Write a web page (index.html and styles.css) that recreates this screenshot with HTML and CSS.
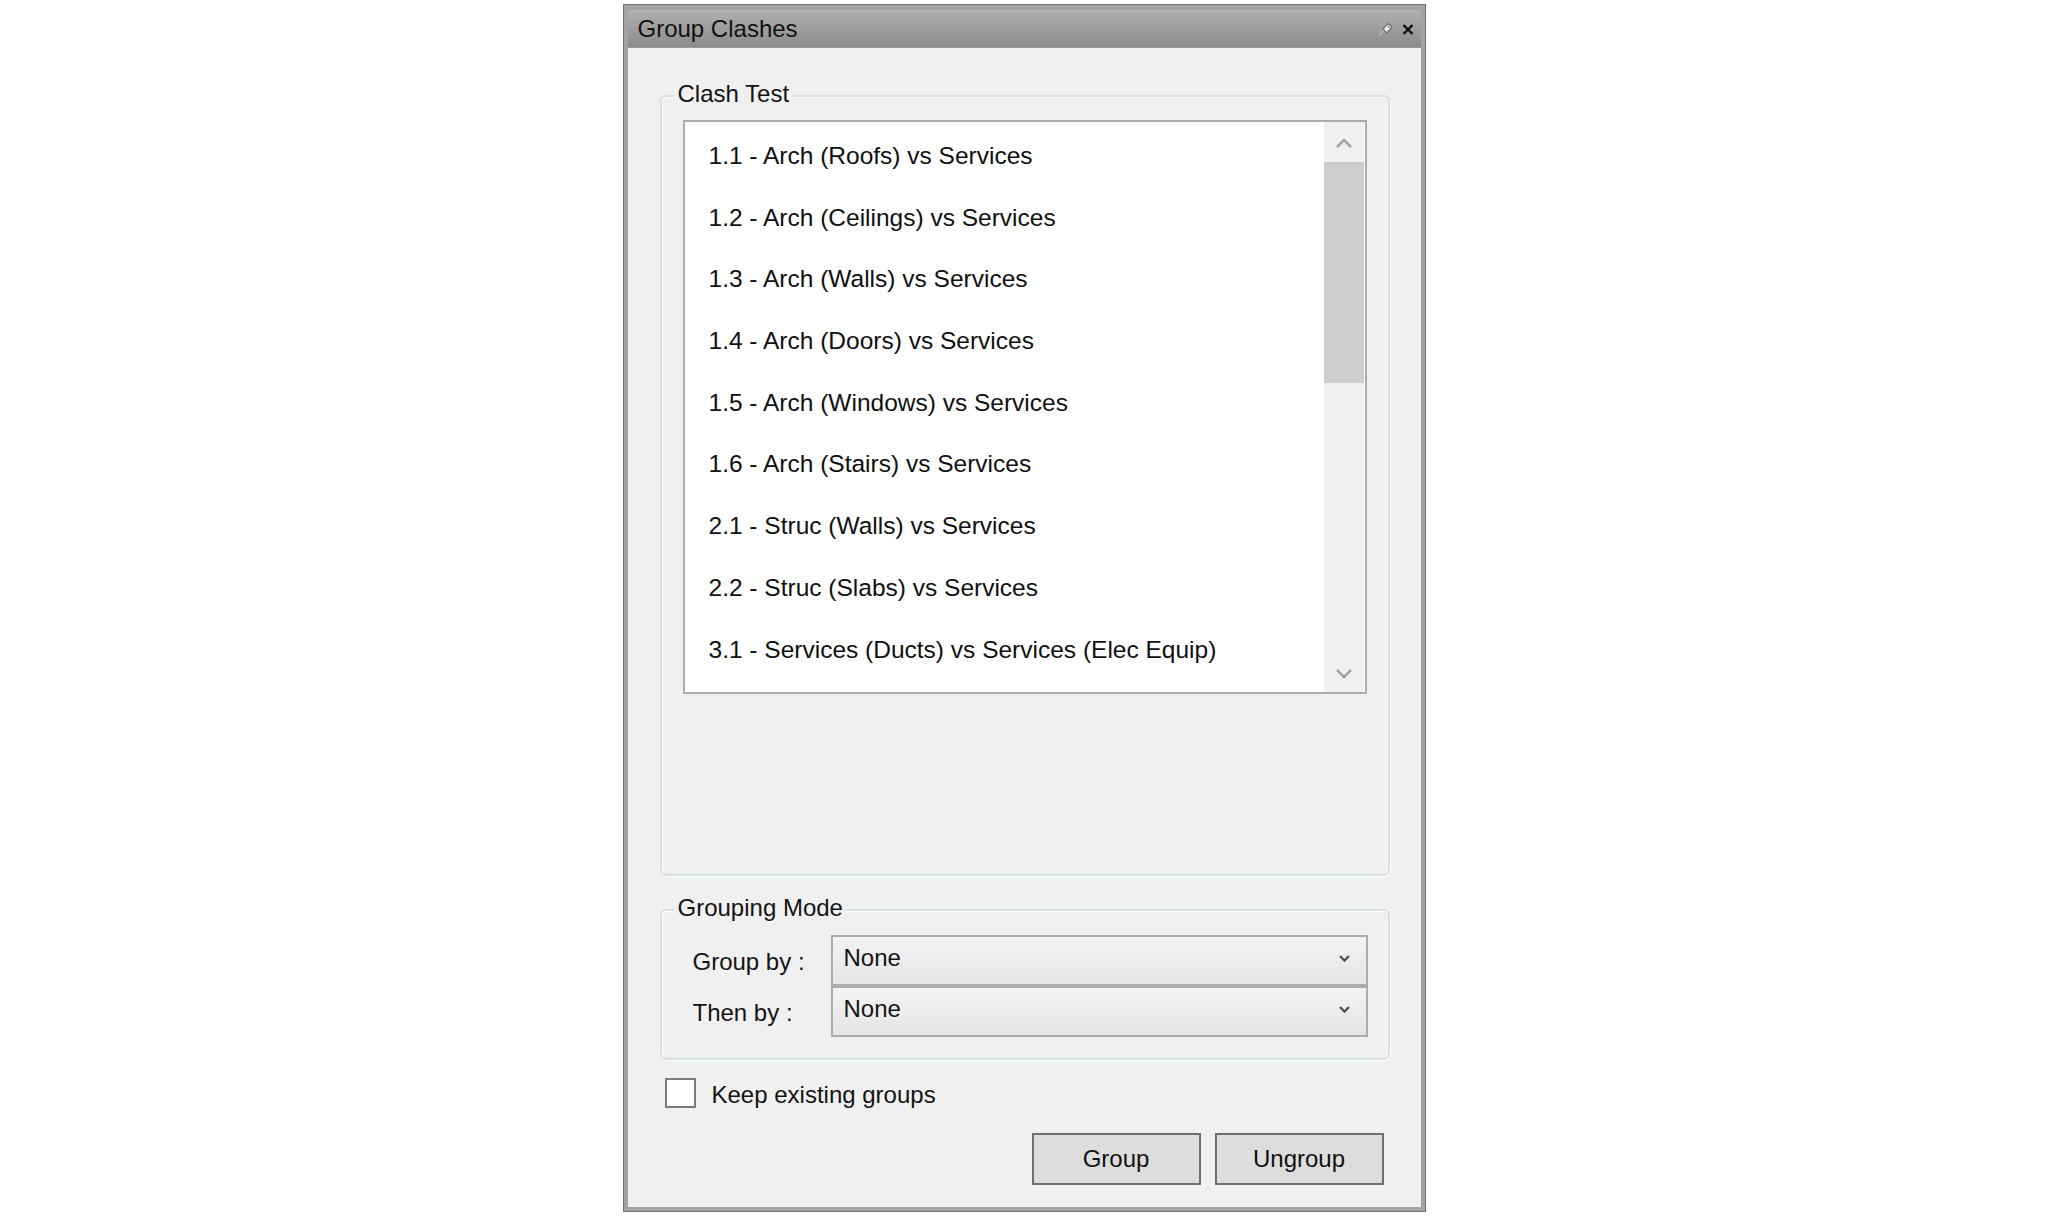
FILE: index.html
```html
<!DOCTYPE html>
<html lang="en">
<head>
<meta charset="utf-8">
<title>Group Clashes</title>
<link rel="stylesheet" href="styles.css">
</head>
<body>
<div class="window">
  <div class="titlebar">
    <span class="title">Group Clashes</span>
    <div class="title-icons">
      <svg class="pin" width="15" height="13" viewBox="0 0 15 13">
        <path d="M1.5 12 L6.5 7" stroke="#b5b5b5" stroke-width="1.6" stroke-linecap="round"/>
        <path d="M5 6 L9 10 L10 8.5 L12.5 6 A2.6 2.6 0 0 0 8.5 2 L6.5 4.5 Z" fill="#f2f2f2" stroke="#6a6a6a" stroke-width="1.2" stroke-linejoin="round"/>
        <circle cx="10.8" cy="3.8" r="1.4" fill="#9a9a9a"/>
      </svg>
      <svg class="close" width="12" height="11" viewBox="0 0 12 11">
        <path d="M1.5 1 L10.5 10 M10.5 1 L1.5 10" stroke="#0d0d0d" stroke-width="2.4"/>
      </svg>
    </div>
  </div>
  <div class="body">
    <section class="groupbox clash">
      <div class="gb-label">Clash Test</div>
      <div class="listbox">
        <ul class="items">
          <li>1.1 - Arch (Roofs) vs Services</li>
          <li>1.2 - Arch (Ceilings) vs Services</li>
          <li>1.3 - Arch (Walls) vs Services</li>
          <li>1.4 - Arch (Doors) vs Services</li>
          <li>1.5 - Arch (Windows) vs Services</li>
          <li>1.6 - Arch (Stairs) vs Services</li>
          <li>2.1 - Struc (Walls) vs Services</li>
          <li>2.2 - Struc (Slabs) vs Services</li>
          <li>3.1 - Services (Ducts) vs Services (Elec Equip)</li>
        </ul>
        <div class="scrollbar">
          <div class="sb-btn">
            <svg width="18" height="13" viewBox="0 0 18 13"><polyline points="2,11 9,4 16,11" fill="none" stroke="#a2a2a2" stroke-width="2.6"/></svg>
          </div>
          <div class="sb-thumb"></div>
          <div class="sb-track"></div>
          <div class="sb-btn sb-down">
            <svg width="18" height="13" viewBox="0 0 18 13"><polyline points="2,2 9,9 16,2" fill="none" stroke="#a2a2a2" stroke-width="2.6"/></svg>
          </div>
        </div>
      </div>
    </section>

    <section class="groupbox grouping">
      <div class="gb-label">Grouping Mode</div>
      <div class="rows">
        <span class="row-label">Group by :</span>
        <div class="combo">
          <span>None</span>
          <svg width="11" height="9" viewBox="0 0 11 9"><polyline points="1,2 5.5,6.5 10,2" fill="none" stroke="#505050" stroke-width="2.3"/></svg>
        </div>
        <span class="row-label">Then by :</span>
        <div class="combo">
          <span>None</span>
          <svg width="11" height="9" viewBox="0 0 11 9"><polyline points="1,2 5.5,6.5 10,2" fill="none" stroke="#505050" stroke-width="2.3"/></svg>
        </div>
      </div>
    </section>

    <div class="check-row">
      <span class="checkbox"></span>
      <span class="check-label">Keep existing groups</span>
    </div>

    <div class="buttons">
      <button class="btn">Group</button>
      <button class="btn">Ungroup</button>
    </div>
  </div>
</div>
</body>
</html>
```
FILE: styles.css
```css
* {
  box-sizing: border-box;
}

html,
body {
  margin: 0;
  padding: 0;
  background: #ffffff;
}

body {
  font-family: "Liberation Sans", Arial, sans-serif;
  font-size: 24px;
  color: #141414;
}

.window {
  width: 803px;
  height: 1208px;
  margin: 4px auto 0;
  border: 1px solid #6e6e6e;
  background: #a3a3a3;
  padding: 5px 4px 4px;
  display: flex;
  flex-direction: column;
}

.titlebar {
  height: 37px;
  flex: none;
  background: linear-gradient(#b1b1b1, #8b8b8b);
  display: flex;
  align-items: center;
  justify-content: space-between;
  padding: 0 7px 0 10px;
}

.title {
  line-height: 37px;
  color: #111111;
}

.title-icons {
  display: flex;
  align-items: center;
  gap: 9px;
  padding-top: 1px;
}

.body {
  flex: 1;
  background: #f0f0f0;
  border-top: 1px solid #9c9c9c;
  padding: 47px 31px 0 32px;
  display: flex;
  flex-direction: column;
}

.groupbox {
  border: 2px solid #d5dfe6;
  border-radius: 6px;
  box-shadow: inset 1px 1px 0 #ffffff, 1px 1px 0 #ffffff;
}

.gb-label {
  margin: -17px 0 0 12px;
  padding: 0 4px;
  width: fit-content;
  line-height: 28px;
  background: #f0f0f0;
}

.clash {
  height: 781px;
}

.listbox {
  margin: 12px 21px 0;
  height: 574px;
  border: 2px solid #a9abb0;
  background: #ffffff;
  display: flex;
  overflow: hidden;
}

.items {
  flex: 1;
  list-style: none;
  margin: 0;
  padding: 3px 0 0 24px;
  font-size: 24.5px;
  color: #101010;
}

.items li {
  height: 61.7px;
  line-height: 61.7px;
  white-space: nowrap;
}

.scrollbar {
  width: 40px;
  margin-right: 1px;
  background: #f0f0f0;
  display: flex;
  flex-direction: column;
}

.sb-btn {
  height: 40px;
  flex: none;
  display: flex;
  align-items: center;
  justify-content: center;
}

.sb-down {
  height: 38px;
  padding-top: 2px;
}

.sb-thumb {
  height: 221px;
  flex: none;
  background: #cdcdcd;
}

.sb-track {
  flex: 1;
}

.grouping {
  margin-top: 33px;
  height: 151px;
}

.rows {
  margin: 13px 20px 0 31px;
  display: grid;
  grid-template-columns: 138px 1fr;
  grid-auto-rows: 51px;
  align-items: center;
}

.row-label {
  line-height: 28px;
  padding-top: 2px;
}

.combo {
  height: 51px;
  border: 2px solid #acacac;
  background: linear-gradient(#f3f3f3, #e5e5e5);
  display: flex;
  align-items: center;
  justify-content: space-between;
  padding: 0 16px 5px 11px;
}

.check-row {
  margin-top: 18px;
  padding-left: 5px;
  display: flex;
  align-items: center;
  gap: 16px;
  height: 30px;
}

.checkbox {
  width: 31px;
  height: 30px;
  border: 2px solid #7c7c7c;
  background: #ffffff;
  flex: none;
}

.check-label {
  line-height: 30px;
  padding-top: 3px;
}

.buttons {
  margin-top: 25px;
  padding-right: 6px;
  display: flex;
  justify-content: flex-end;
  gap: 14px;
}

.btn {
  width: 169px;
  height: 52px;
  border: 2px solid #707070;
  background: #dddddd;
  font-family: inherit;
  font-size: 24px;
  color: #111111;
  padding: 0;
}
```
